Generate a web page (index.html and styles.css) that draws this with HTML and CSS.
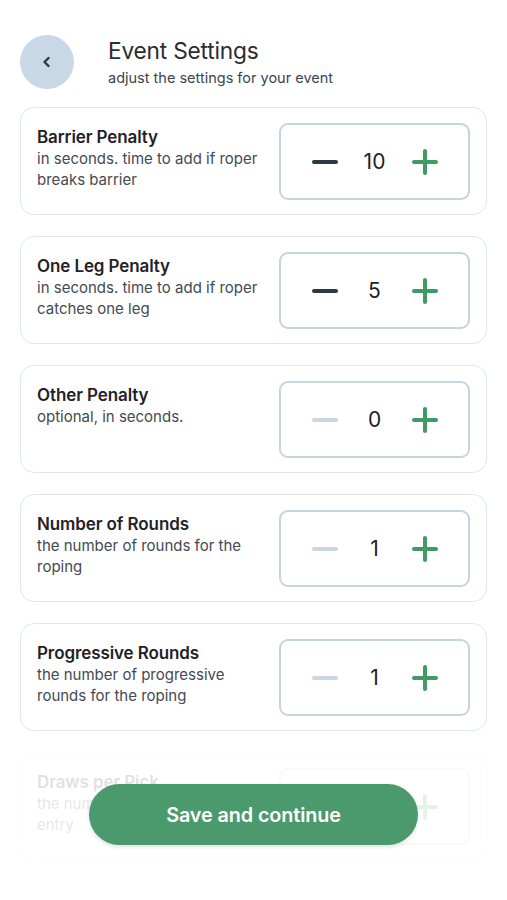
FILE: index.html
```html
<!DOCTYPE html>
<html lang="en">
<head>
<meta charset="utf-8">
<title>Event Settings</title>
<link rel="stylesheet" href="styles.css">
</head>
<body>
<div class="screen">
  <header class="header">
    <button class="back" aria-label="Back">
      <svg width="14" height="14" viewBox="0 0 14 14"><path d="M8.5 3 L4.5 7 L8.5 11" fill="none" stroke="#2b3944" stroke-width="2.4" stroke-linecap="round" stroke-linejoin="round"/></svg>
    </button>
    <div class="heading">
      <h1 class="title">Event Settings</h1>
      <p class="subtitle">adjust the settings for your event</p>
    </div>
  </header>

  <main class="list">
    <section class="card">
      <div class="info">
        <h2 class="label">Barrier Penalty</h2>
        <p class="desc">in seconds. time to add if roper breaks barrier</p>
      </div>
      <div class="stepper">
        <span class="minus"></span>
        <span class="value">10</span>
        <span class="plus"></span>
      </div>
    </section>

    <section class="card">
      <div class="info">
        <h2 class="label">One Leg Penalty</h2>
        <p class="desc">in seconds. time to add if roper catches one leg</p>
      </div>
      <div class="stepper">
        <span class="minus"></span>
        <span class="value">5</span>
        <span class="plus"></span>
      </div>
    </section>

    <section class="card">
      <div class="info">
        <h2 class="label">Other Penalty</h2>
        <p class="desc">optional, in seconds.</p>
      </div>
      <div class="stepper">
        <span class="minus disabled"></span>
        <span class="value">0</span>
        <span class="plus"></span>
      </div>
    </section>

    <section class="card">
      <div class="info">
        <h2 class="label">Number of Rounds</h2>
        <p class="desc">the number of rounds for the roping</p>
      </div>
      <div class="stepper">
        <span class="minus disabled"></span>
        <span class="value">1</span>
        <span class="plus"></span>
      </div>
    </section>

    <section class="card">
      <div class="info">
        <h2 class="label">Progressive Rounds</h2>
        <p class="desc">the number of progressive rounds for the roping</p>
      </div>
      <div class="stepper">
        <span class="minus disabled"></span>
        <span class="value">1</span>
        <span class="plus"></span>
      </div>
    </section>

    <section class="card">
      <div class="info">
        <h2 class="label">Draws per Pick</h2>
        <p class="desc">the number of draws per pick entry</p>
      </div>
      <div class="stepper">
        <span class="minus disabled"></span>
        <span class="value">1</span>
        <span class="plus"></span>
      </div>
    </section>
  </main>

  <div class="fade"></div>
  <button class="save">Save and continue</button>
</div>
</body>
</html>
```

FILE: styles.css
```css
* { box-sizing: border-box; }

html, body {
  margin: 0;
  padding: 0;
  background: #ffffff;
}

body {
  font-family: Inter, "Noto Sans", "Liberation Sans", sans-serif;
  color: #1f2328;
}

.screen {
  position: relative;
  width: 507px;
  height: 900px;
  overflow: hidden;
  background: #ffffff;
}

.header {
  display: flex;
  align-items: center;
  gap: 34px;
  padding: 35px 20px 0 20px;
}

.back {
  width: 54px;
  height: 54px;
  border-radius: 50%;
  border: none;
  background: #c8d8e6;
  display: flex;
  align-items: center;
  justify-content: center;
  padding: 0;
  flex-shrink: 0;
}

.heading {
  display: flex;
  flex-direction: column;
  margin-top: 0;
}

.title {
  margin: 0;
  font-size: 22.7px;
  font-weight: 400;
  line-height: 30px;
  color: #2a2d31;
  letter-spacing: -0.2px;
}

.subtitle {
  margin: 2px 0 0 0;
  font-size: 14.5px;
  line-height: 20px;
  color: #3d4450;
}

.list {
  display: flex;
  flex-direction: column;
  gap: 21px;
  padding: 18px 20px 0 20px;
}

.card {
  display: flex;
  justify-content: space-between;
  align-items: flex-start;
  height: 108px;
  padding: 15px 16px 15px 16px;
  border: 1px solid #dfe6ee;
  border-radius: 14px;
  background: #ffffff;
  flex-shrink: 0;
}

.info {
  padding-top: 3px;
  width: 236px;
}

.label {
  margin: 0;
  font-size: 17px;
  font-weight: 600;
  line-height: 22px;
  color: #1f2226;
  letter-spacing: -0.1px;
}

.desc {
  margin: 0;
  font-size: 15px;
  line-height: 21px;
  color: #444a52;
}

.stepper {
  width: 191px;
  height: 77px;
  border: 2px solid #c6d3e0;
  border-radius: 9px;
  display: grid;
  grid-template-columns: 50px 50px 50px;
  justify-content: center;
  align-items: center;
  justify-items: center;
  flex-shrink: 0;
}

.minus {
  display: block;
  width: 26px;
  height: 4px;
  border-radius: 2px;
  background: #2c3a44;
}

.minus.disabled {
  background: #c9d6e3;
}

.value {
  font-size: 21px;
  font-weight: 400;
  color: #1f2226;
}

.plus {
  position: relative;
  display: block;
  width: 26px;
  height: 26px;
}

.plus::before,
.plus::after {
  content: "";
  position: absolute;
  background: #3f9a63;
  border-radius: 2px;
}

.plus::before {
  left: 0;
  top: 11px;
  width: 26px;
  height: 4px;
}

.plus::after {
  left: 11px;
  top: 0;
  width: 4px;
  height: 26px;
}

.fade {
  position: absolute;
  left: 0;
  right: 0;
  top: 733px;
  bottom: 0;
  background: linear-gradient(to bottom, rgba(255,255,255,0) 0px, rgba(255,255,255,0.86) 20px, rgba(255,255,255,0.88) 100%);
}

.save {
  position: absolute;
  left: 89px;
  top: 784px;
  width: 329px;
  height: 61px;
  border: none;
  border-radius: 31px;
  background: #4b9a6d;
  color: #ffffff;
  font-family: Inter, "Noto Sans", "Liberation Sans", sans-serif;
  font-size: 19.8px;
  font-weight: 600;
  letter-spacing: -0.1px;
  box-shadow: 0 2px 4px rgba(0, 0, 0, 0.12);
}
```
